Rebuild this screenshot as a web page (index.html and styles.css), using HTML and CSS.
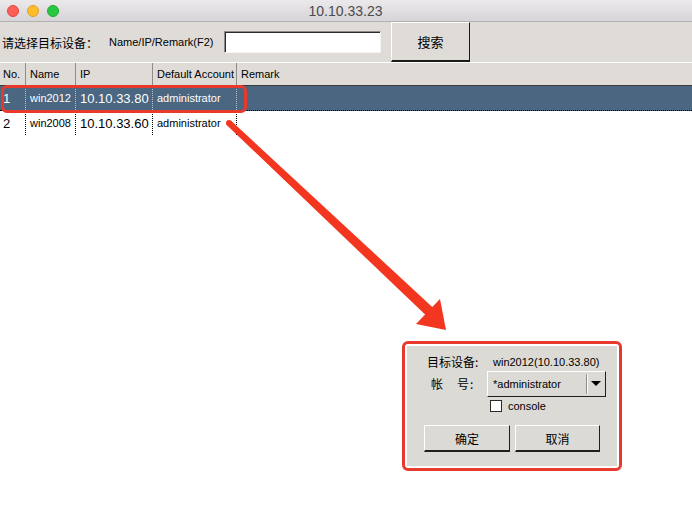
FILE: index.html
```
<!DOCTYPE html>
<html>
<head>
<meta charset="utf-8">
<link rel="stylesheet" href="styles.css">
</head>
<body>
<div class="window">
  <div class="titlebar">
    <div class="lights">
      <span class="light red"></span>
      <span class="light yellow"></span>
      <span class="light green"></span>
    </div>
    <div class="title">10.10.33.23</div>
  </div>
  <div class="toolbar">
    <span class="tb-label">请选择目标设备：</span>
    <span class="tb-hint">Name/IP/Remark(F2)</span>
    <span class="tb-input"></span>
    <span class="tb-button">搜索</span>
  </div>
  <div class="table">
    <div class="row head">
      <div class="cell">No.</div>
      <div class="cell">Name</div>
      <div class="cell">IP</div>
      <div class="cell">Default Account</div>
      <div class="cell last">Remark</div>
    </div>
    <div class="row data selected">
      <div class="cell">1</div>
      <div class="cell">win2012</div>
      <div class="cell ip">10.10.33.80</div>
      <div class="cell">administrator</div>
      <div class="cell last"></div>
    </div>
    <div class="row data">
      <div class="cell">2</div>
      <div class="cell">win2008</div>
      <div class="cell ip">10.10.33.60</div>
      <div class="cell">administrator</div>
      <div class="cell last"></div>
    </div>
  </div>

  <div class="highlight"></div>

  <svg class="arrow" width="692" height="513" viewBox="0 0 692 513">
    <circle cx="229" cy="123" r="3" fill="#f2361f"/>
    <polygon points="226.9,125.2 231.1,120.8 433.6,308.2 426.4,315.8" fill="#f2361f"/>
    <polygon points="416,324 440,299 446,330" fill="#f2361f"/>
  </svg>

  <div class="dialog">
    <div class="dialog-inner">
      <div class="form">
        <span class="lbl">目标设备:</span>
        <span class="val">win2012(10.10.33.80)</span>
        <span class="lbl spaced">帐　号:</span>
        <div class="combo">
          <span class="combo-text">*administrator</span>
          <span class="combo-btn"><span class="tri"></span></span>
        </div>
        <span></span>
        <label class="check"><span class="box"></span><span>console</span></label>
      </div>
      <div class="buttons">
        <span class="btn">确定</span>
        <span class="btn">取消</span>
      </div>
    </div>
  </div>
</div>
</body>
</html>
```

FILE: styles.css
```
* { box-sizing: border-box; }
html, body {
  margin: 0;
  padding: 0;
  background: #ffffff;
}
body {
  width: 692px;
  height: 513px;
  overflow: hidden;
  font-family: "Liberation Sans", "Noto Sans CJK SC", sans-serif;
  font-size: 11px;
  color: #000;
}
.window {
  position: relative;
  width: 692px;
  height: 513px;
  background: #fff;
}
.titlebar {
  height: 22px;
  background: linear-gradient(#ebe9eb, #d6d4d6);
  border-bottom: 1px solid #b3b1b3;
  display: flex;
  align-items: center;
  position: relative;
}
.lights {
  display: flex;
  gap: 8px;
  padding-left: 7px;
}
.light {
  width: 12px;
  height: 12px;
  border-radius: 50%;
  display: block;
}
.light.red { background: #fd5f57; border: 1px solid #e14640; }
.light.yellow { background: #febc2e; border: 1px solid #dea123; }
.light.green { background: #28c840; border: 1px solid #1dad2b; }
.title {
  flex: 1;
  text-align: center;
  font-size: 14px;
  color: #4b4b4b;
  margin-right: 60px;
}
.toolbar {
  height: 41px;
  background: #dfdcd8;
  border-bottom: 1px solid #ffffff;
  display: flex;
  align-items: center;
}
.tb-label {
  font-family: "Noto Sans CJK SC", sans-serif;
  font-size: 12px;
  margin-left: 2px;
  width: 104px;
  white-space: nowrap;
}
.tb-hint {
  margin-left: 3px;
  font-size: 11px;
  width: 115px;
  white-space: nowrap;
}
.tb-input {
  width: 157px;
  height: 22px;
  background: #fff;
  border-top: 1px solid #8e8c89;
  border-left: 1px solid #8e8c89;
  border-right: 1px solid #f4f3f1;
  border-bottom: 1px solid #f4f3f1;
  box-shadow: inset 1px 1px 0 #2b2b2b;
}
.tb-button {
  margin-left: 10px;
  width: 79px;
  height: 40px;
  align-self: flex-start;
  display: flex;
  align-items: center;
  justify-content: center;
  font-family: "Noto Sans CJK SC", sans-serif;
  font-size: 13px;
  background: #dfdcd8;
  border-top: 1px solid #ffffff;
  border-left: 1px solid #ffffff;
  border-right: 1px solid #1a1a1a;
  border-bottom: 2px solid #1a1a1a;
}
.table {
  display: flex;
  flex-direction: column;
}
.row {
  display: grid;
  grid-template-columns: 26px 50px 77px 84px 1fr;
}
.row.head {
  height: 23px;
  background: #dfdcd8;
  border-bottom: 1px solid #3c3c3c;
}
.row.head .cell {
  border-right: 1px solid #8e8c89;
  padding-left: 4px;
  display: flex;
  align-items: center;
  white-space: nowrap;
  overflow: hidden;
}
.row.head .cell:first-child { padding-left: 3px; }
.row.head .cell.last { border-right: none; }
.row.data { height: 24px; }
.row.data .cell {
  border-right: 1px dotted #000;
  padding-left: 4px;
  display: flex;
  align-items: center;
  white-space: nowrap;
  overflow: hidden;
}
.row.data .cell:first-child { padding-left: 3px; font-size: 13px; }
.row.data .cell.ip { font-size: 13px; padding-left: 4px; }
.row.data .cell.last { border-right: none; }
.row.selected {
  height: 25px;
  background: #4a6681;
  color: #ffffff;
  border-bottom: 1px dotted #000;
}
.row.selected .cell {
  border-right: 1px dotted #b9c3cd;
}
.highlight {
  position: absolute;
  left: 1px;
  top: 85px;
  width: 246px;
  height: 28px;
  border: 3px solid #e8392d;
  border-radius: 6px;
}
.arrow {
  position: absolute;
  left: 0;
  top: 0;
}
.dialog {
  position: absolute;
  left: 402px;
  top: 341px;
  width: 220px;
  height: 130px;
  border: 3px solid #e8392d;
  border-radius: 6px;
  padding: 2px;
  background: #ffffff;
}
.dialog-inner {
  height: 100%;
  background: #dcdad5;
  padding: 8px 0 0 18px;
}
.form {
  display: grid;
  grid-template-columns: 56px 119px;
  grid-template-rows: 16px 26px 16px;
  column-gap: 6px;
  row-gap: 1px;
  align-items: center;
}
.lbl {
  font-family: "Noto Sans CJK SC", sans-serif;
  font-size: 12px;
  white-space: nowrap;
  line-height: 16px;
  padding-left: 2px;
}
.lbl.spaced {
  padding-left: 6px;
  letter-spacing: 1px;
}
.val {
  padding-left: 6px;
  font-size: 11px;
  white-space: nowrap;
}
.combo {
  height: 26px;
  display: flex;
  align-items: stretch;
  background: #dcdad5;
  border-top: 1px solid #ffffff;
  border-left: 1px solid #ffffff;
  border-right: 1px solid #1f1f1f;
  border-bottom: 1px solid #1f1f1f;
}
.combo-text {
  flex: 1;
  padding-left: 5px;
  display: flex;
  align-items: center;
  font-size: 11px;
}
.combo-btn {
  width: 19px;
  margin: 2px 0;
  border-left: 1px solid #8e8c89;
  box-shadow: inset 1px 0 0 #ffffff;
  display: flex;
  align-items: center;
  justify-content: center;
}
.tri {
  width: 0;
  height: 0;
  border-left: 5px solid transparent;
  border-right: 5px solid transparent;
  border-top: 5px solid #000;
  margin-top: -2px;
}
.check {
  display: flex;
  align-items: center;
  gap: 6px;
  padding-left: 3px;
  font-size: 11px;
}
.box {
  width: 12px;
  height: 12px;
  background: #fff;
  border: 1px solid #2a2a2a;
  display: block;
}
.buttons {
  display: flex;
  gap: 5px;
  margin-top: 11px;
  margin-left: -1px;
}
.btn {
  width: 86px;
  height: 27px;
  display: flex;
  align-items: center;
  justify-content: center;
  font-family: "Noto Sans CJK SC", sans-serif;
  font-size: 12px;
  background: #dcdad5;
  border-top: 1px solid #ffffff;
  border-left: 1px solid #ffffff;
  border-right: 1px solid #1f1f1f;
  border-bottom: 2px solid #1f1f1f;
}
.btn + .btn { width: 85px; }
```
